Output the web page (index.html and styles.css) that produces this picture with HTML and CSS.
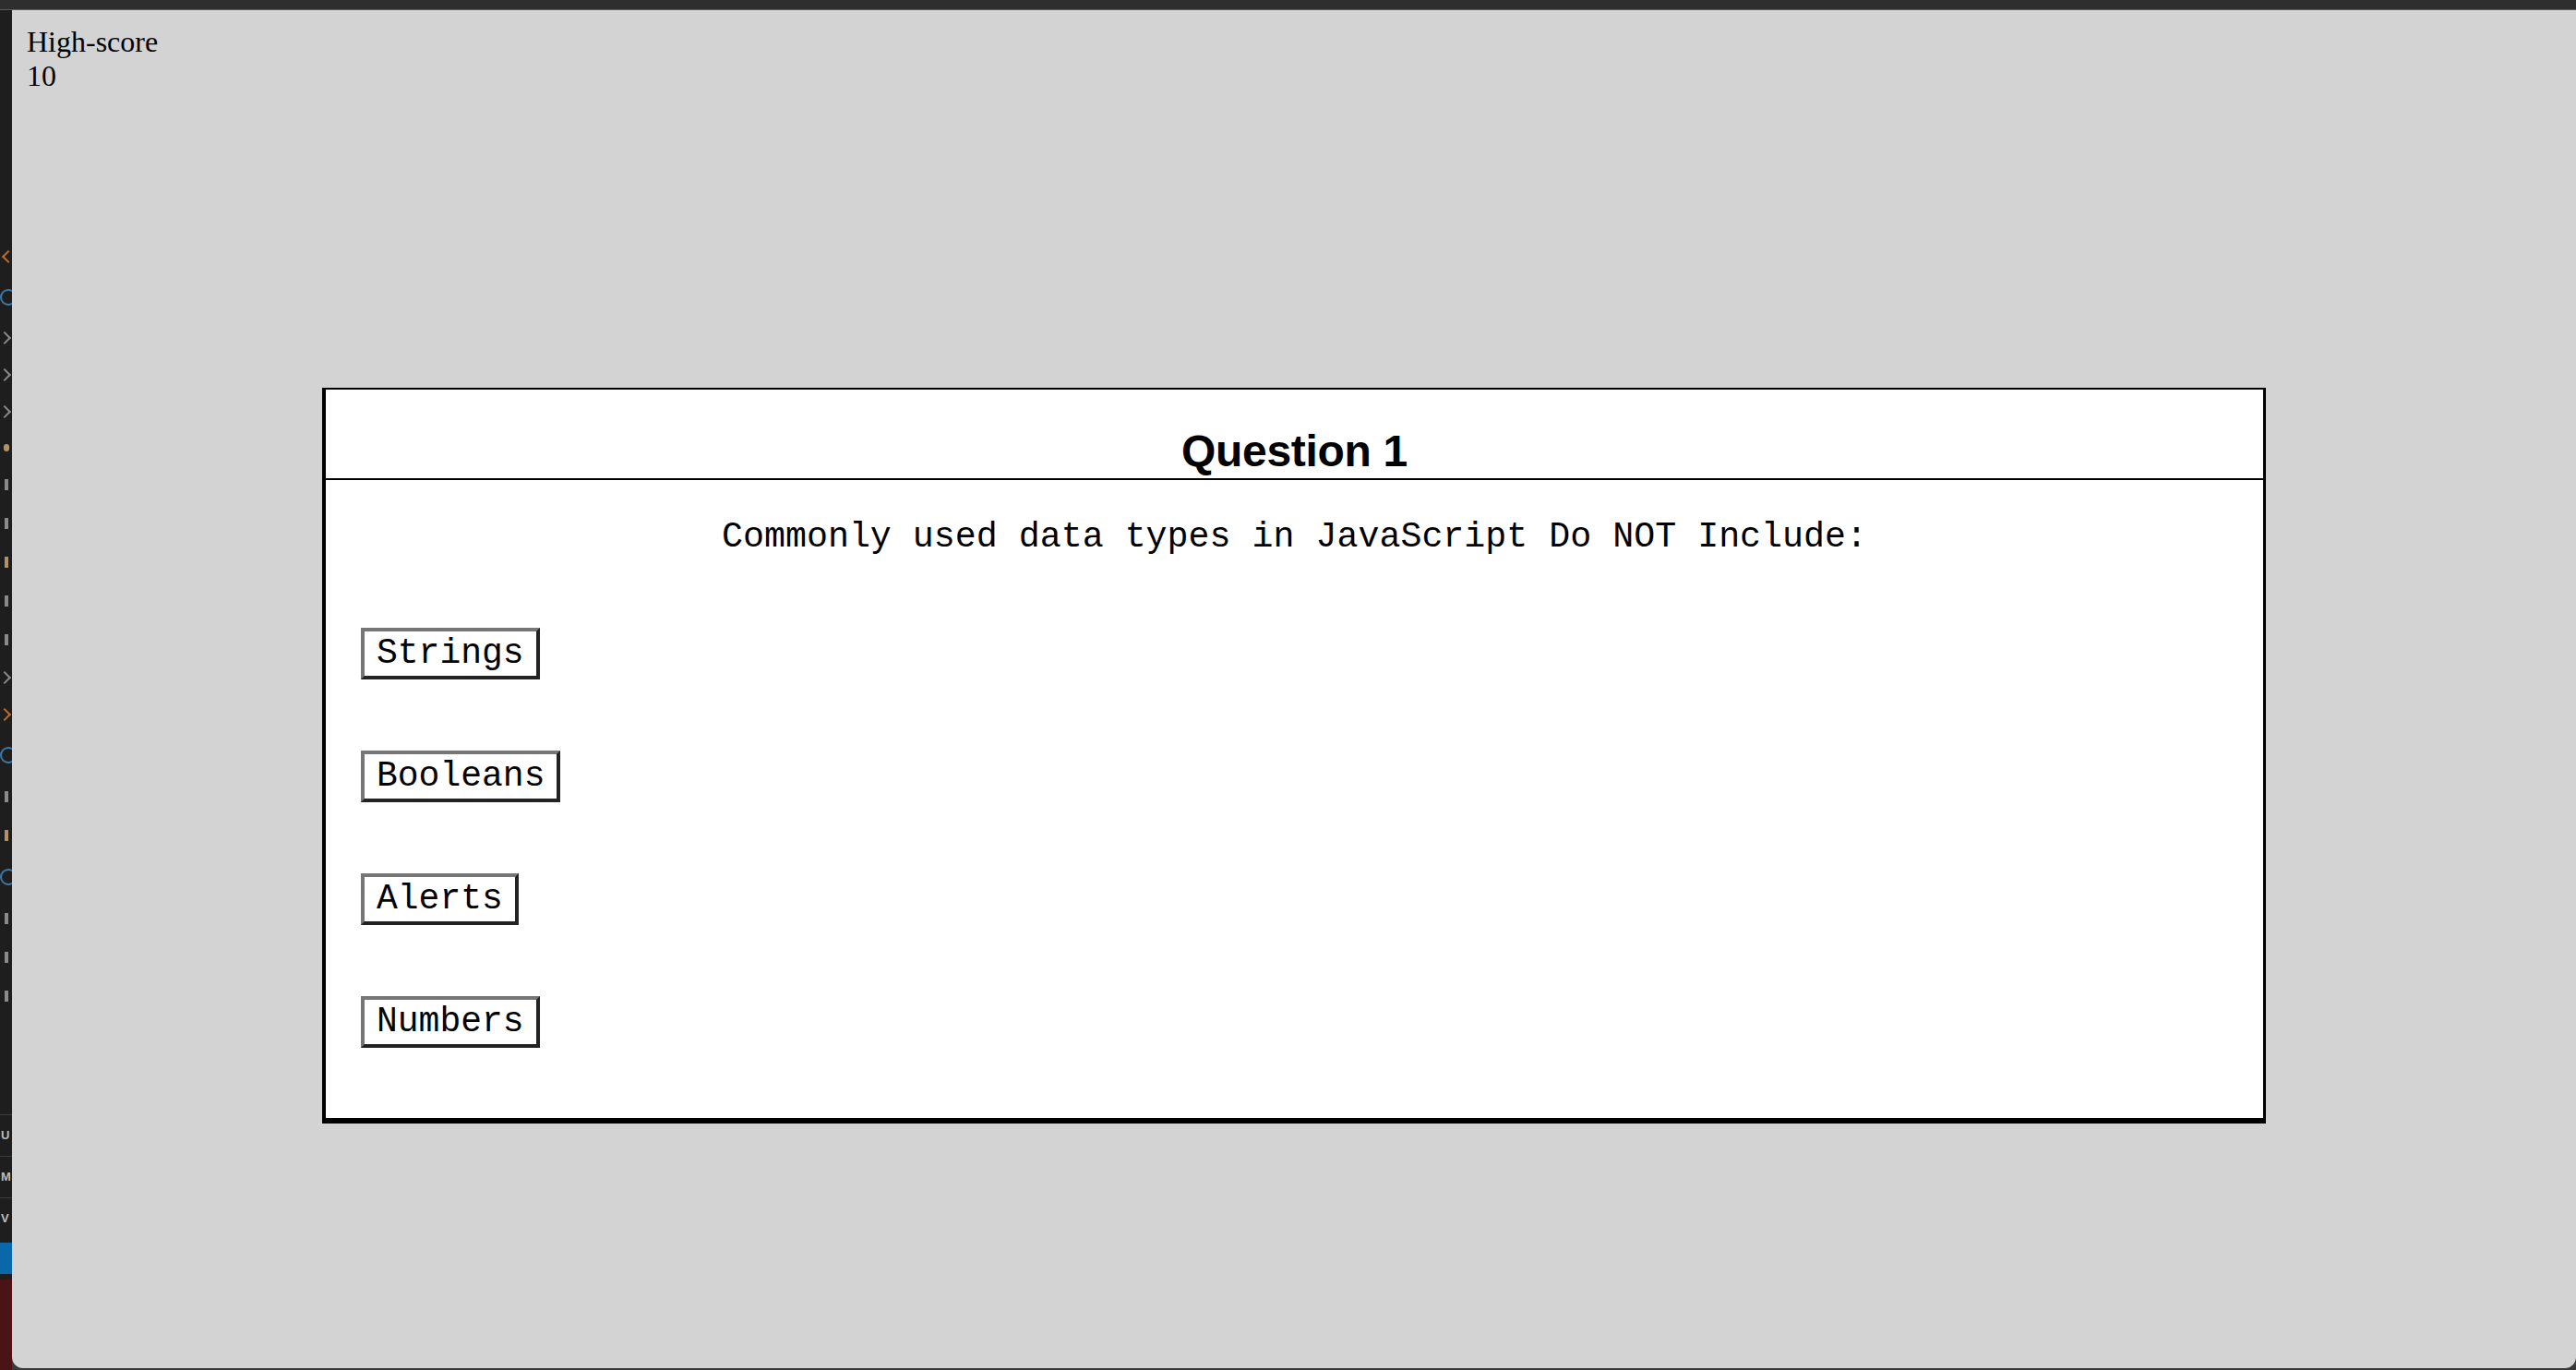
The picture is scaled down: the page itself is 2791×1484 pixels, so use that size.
FILE: index.html
```html
<!DOCTYPE html>
<html lang="en">
<head>
<meta charset="utf-8">
<title>Quiz</title>
<link rel="stylesheet" href="styles.css">
</head>
<body>
<div class="window">
  <div class="titlebar"></div>
  <div class="frame">
    <aside class="gutter">
      <div class="marks">
        <span class="m chev orange"></span>
        <span class="m ring blue"></span>
        <span class="m chev right gray"></span>
        <span class="m chev right gray"></span>
        <span class="m chev right gray"></span>
        <span class="m dot tan"></span>
        <span class="m bar gray"></span>
        <span class="m bar gray"></span>
        <span class="m bar tan"></span>
        <span class="m bar gray"></span>
        <span class="m bar gray"></span>
        <span class="m chev right gray"></span>
        <span class="m chev right orange"></span>
        <span class="m ring blue"></span>
        <span class="m bar gray"></span>
        <span class="m bar tan"></span>
        <span class="m ring blue"></span>
        <span class="m bar gray"></span>
        <span class="m bar gray"></span>
        <span class="m bar gray"></span>
      </div>
      <div class="tabs">
        <span class="tab">U</span>
        <span class="tab">M</span>
        <span class="tab">V</span>
      </div>
      <div class="status"></div>
      <div class="redzone"></div>
    </aside>
    <main class="page">
      <div class="score">
        <div>High-score</div>
        <div>10</div>
      </div>
      <section class="card">
        <header class="card-head">
          <h2 class="card-title">Question 1</h2>
        </header>
        <div class="card-body">
          <p class="question">Commonly used data types in JavaScript Do NOT Include:</p>
          <div class="answers">
            <button class="answer">Strings</button>
            <button class="answer">Booleans</button>
            <button class="answer">Alerts</button>
            <button class="answer">Numbers</button>
          </div>
        </div>
      </section>
    </main>
  </div>
</div>
</body>
</html>
```

FILE: styles.css
```css
html, body {
  margin: 0;
  padding: 0;
  height: 100%;
}

body {
  background: #3a3a3a;
  overflow: hidden;
}

.window {
  display: flex;
  flex-direction: column;
  height: 1484px;
}

.titlebar {
  height: 10px;
  background: #2e2e2e;
  border-bottom: 1px solid #5a5a5a;
  flex: none;
}

.frame {
  flex: 1;
  display: flex;
  min-height: 0;
}

.gutter {
  width: 13px;
  flex: none;
  background: #1e1e1e;
  display: flex;
  flex-direction: column;
  overflow: hidden;
}

.marks {
  display: flex;
  flex-direction: column;
  align-items: flex-end;
  padding-top: 262px;
  gap: 30px;
  padding-right: 3px;
}

.m {
  display: block;
  height: 14px;
  width: 6px;
}

.m.chev {
  width: 8px;
  height: 8px;
  border-left: 2px solid currentColor;
  border-bottom: 2px solid currentColor;
  transform: rotate(45deg);
  margin-right: -4px;
}

.m.chev.right {
  transform: rotate(-135deg);
  margin-right: 0;
}

.m.ring {
  width: 14px;
  height: 14px;
  border: 2px solid currentColor;
  border-radius: 50%;
  margin-right: -8px;
}

.m.dot {
  width: 6px;
  height: 8px;
  border-radius: 3px;
  background: currentColor;
}

.m.bar {
  width: 4px;
  height: 12px;
  background: currentColor;
  margin-right: 1px;
}

.orange { color: #c46b2a; }
.blue { color: #3a7aa8; }
.gray { color: #8a8a8a; }
.tan { color: #b39364; }

.tabs {
  margin-top: auto;
  display: flex;
  flex-direction: column;
}

.tab {
  height: 44px;
  border-top: 1px solid #3c3c3c;
  color: #bdbdbd;
  font: bold 13px "Liberation Sans", Arial, sans-serif;
  line-height: 44px;
  padding-left: 1px;
}

.status {
  height: 34px;
  background: #0a67a8;
  margin-top: 4px;
}

.redzone {
  height: 98px;
  background: #4a1417;
  margin-top: 6px;
}

.page {
  flex: 1;
  background: #d3d3d3;
  border-radius: 0 0 12px 12px;
  padding: 16px;
  margin-bottom: 2px;
  font-family: "Liberation Serif", "Times New Roman", serif;
  font-size: 32px;
  color: #000;
  overflow: hidden;
}

.score {
  line-height: 37px;
}

.card {
  box-sizing: border-box;
  width: 2106px;
  margin: 319px auto 0;
  background: #fff;
  border-style: solid;
  border-color: #000;
  border-width: 2px 3px 6px 4px;
}

.card-head {
  box-sizing: border-box;
  height: 98px;
  border-bottom: 2px solid #000;
  display: flex;
  align-items: flex-end;
  justify-content: center;
  padding-bottom: 2px;
}

.card-title {
  margin: 0;
  font-family: "Liberation Sans", Arial, Helvetica, sans-serif;
  font-weight: bold;
  font-size: 48px;
  line-height: 55px;
  letter-spacing: -0.3px;
}

.card-body {
  padding: 41px 38px 76px;
}

.question {
  margin: 0 0 76px;
  text-align: center;
  font-family: "Liberation Mono", "Courier New", monospace;
  font-size: 38.3px;
  line-height: 43px;
}

.answers {
  display: flex;
  flex-direction: column;
  align-items: flex-start;
  gap: 77px;
}

.answer {
  font-family: "Liberation Mono", "Courier New", monospace;
  font-size: 38px;
  line-height: 44px;
  color: #000;
  background: #fff;
  padding: 2px 13px;
  margin: 0;
  border-style: solid;
  border-width: 4px;
  border-color: #767676 #222 #222 #767676;
  border-radius: 0;
}
```
